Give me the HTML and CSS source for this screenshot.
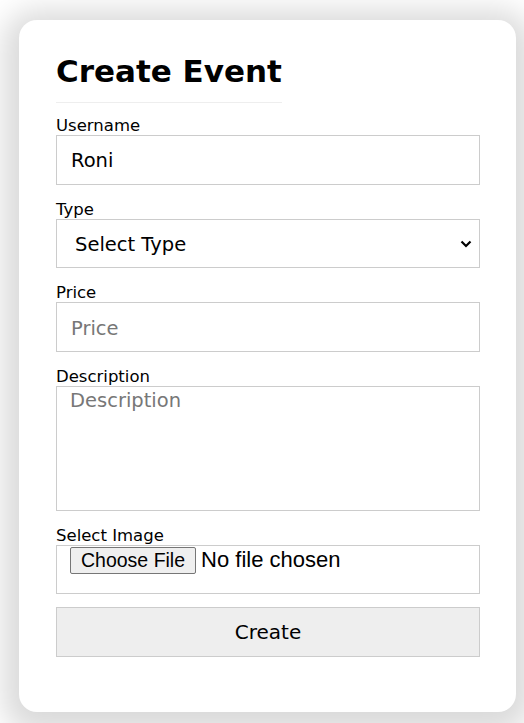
FILE: index.html
```html
<!DOCTYPE html>
<html>
<head>
<meta charset="utf-8">
<link rel="stylesheet" href="styles.css">
</head>
<body>
<div class="page">
  <form class="card">
    <h1 class="title">Create Event</h1>
    <label class="label">Username</label>
    <input class="field" type="text" value="Roni">
    <label class="label">Type</label>
    <select class="field select">
      <option>Select Type</option>
    </select>
    <label class="label">Price</label>
    <input class="field" type="text" placeholder="Price">
    <label class="label">Description</label>
    <textarea class="field area" placeholder="Description"></textarea>
    <label class="label">Select Image</label>
    <div class="filebox"><input class="file" type="file"></div>
    <button class="btn" type="button">Create</button>
  </form>
</div>
</body>
</html>
```

FILE: styles.css
```css
html, body {
  margin: 0;
  padding: 0;
  background: #ffffff;
}
.page {
  padding: 20px 8px 11px 19px;
}
.card {
  display: flex;
  flex-direction: column;
  align-items: stretch;
  background: #fff;
  border-radius: 18px;
  box-shadow: 0 6px 30px 16px rgba(0,0,0,0.15);
  padding: 31px 36px 55px 37px;
  height: 692px;
  box-sizing: border-box;
  font-family: "DejaVu Sans", Verdana, sans-serif;
  color: #000;
}
.title {
  align-self: flex-start;
  margin: 0 0 14px 0;
  font-size: 31px;
  line-height: 40px;
  font-weight: bold;
  padding-bottom: 11px;
  border-bottom: 1px solid #eeeeee;
}
.label {
  font-size: 16.5px;
  line-height: 18px;
  height: 18px;
  display: block;
}
.field {
  box-sizing: border-box;
  height: 50px;
  border: 1px solid #cccccc;
  border-radius: 0;
  padding: 2px 14px 0;
  margin: 0 0 16px 0;
  font-family: "DejaVu Sans", Verdana, sans-serif;
  font-size: 19.5px;
  color: #000;
  background: #fff;
  outline: none;
}
.field::placeholder {
  color: #777;
}
.select {
  appearance: none;
  -webkit-appearance: none;
  padding-left: 18px;
  background-image: url("data:image/svg+xml;utf8,<svg xmlns='http://www.w3.org/2000/svg' width='12' height='8' viewBox='0 0 12 8'><path d='M1.5 1.5 L6 6 L10.5 1.5' fill='none' stroke='black' stroke-width='2.2'/></svg>");
  background-repeat: no-repeat;
  background-position: right 7px center;
}
.area {
  height: 125px;
  padding: 2px 13px;
  resize: none;
  line-height: 24px;
}
.filebox {
  box-sizing: border-box;
  height: 50px;
  border: 1px solid #cccccc;
  padding: 1px 13px 0;
  margin: 0 0 13px 0;
}
.file {
  font-family: "Liberation Sans", Arial, sans-serif;
  font-size: 22px;
  color: #000;
}
.file::file-selector-button {
  font-family: "Liberation Sans", Arial, sans-serif;
  font-size: 19.5px;
  padding: 1px 10px;
  margin-right: 5px;
  border: 1px solid #767676;
  border-radius: 2px;
  background: #efefef;
  color: #000;
}
.btn {
  box-sizing: border-box;
  height: 50px;
  border: 1px solid #cccccc;
  background: #eeeeee;
  font-family: "DejaVu Sans", Verdana, sans-serif;
  font-size: 20px;
  color: #000;
  padding: 0;
}
```
